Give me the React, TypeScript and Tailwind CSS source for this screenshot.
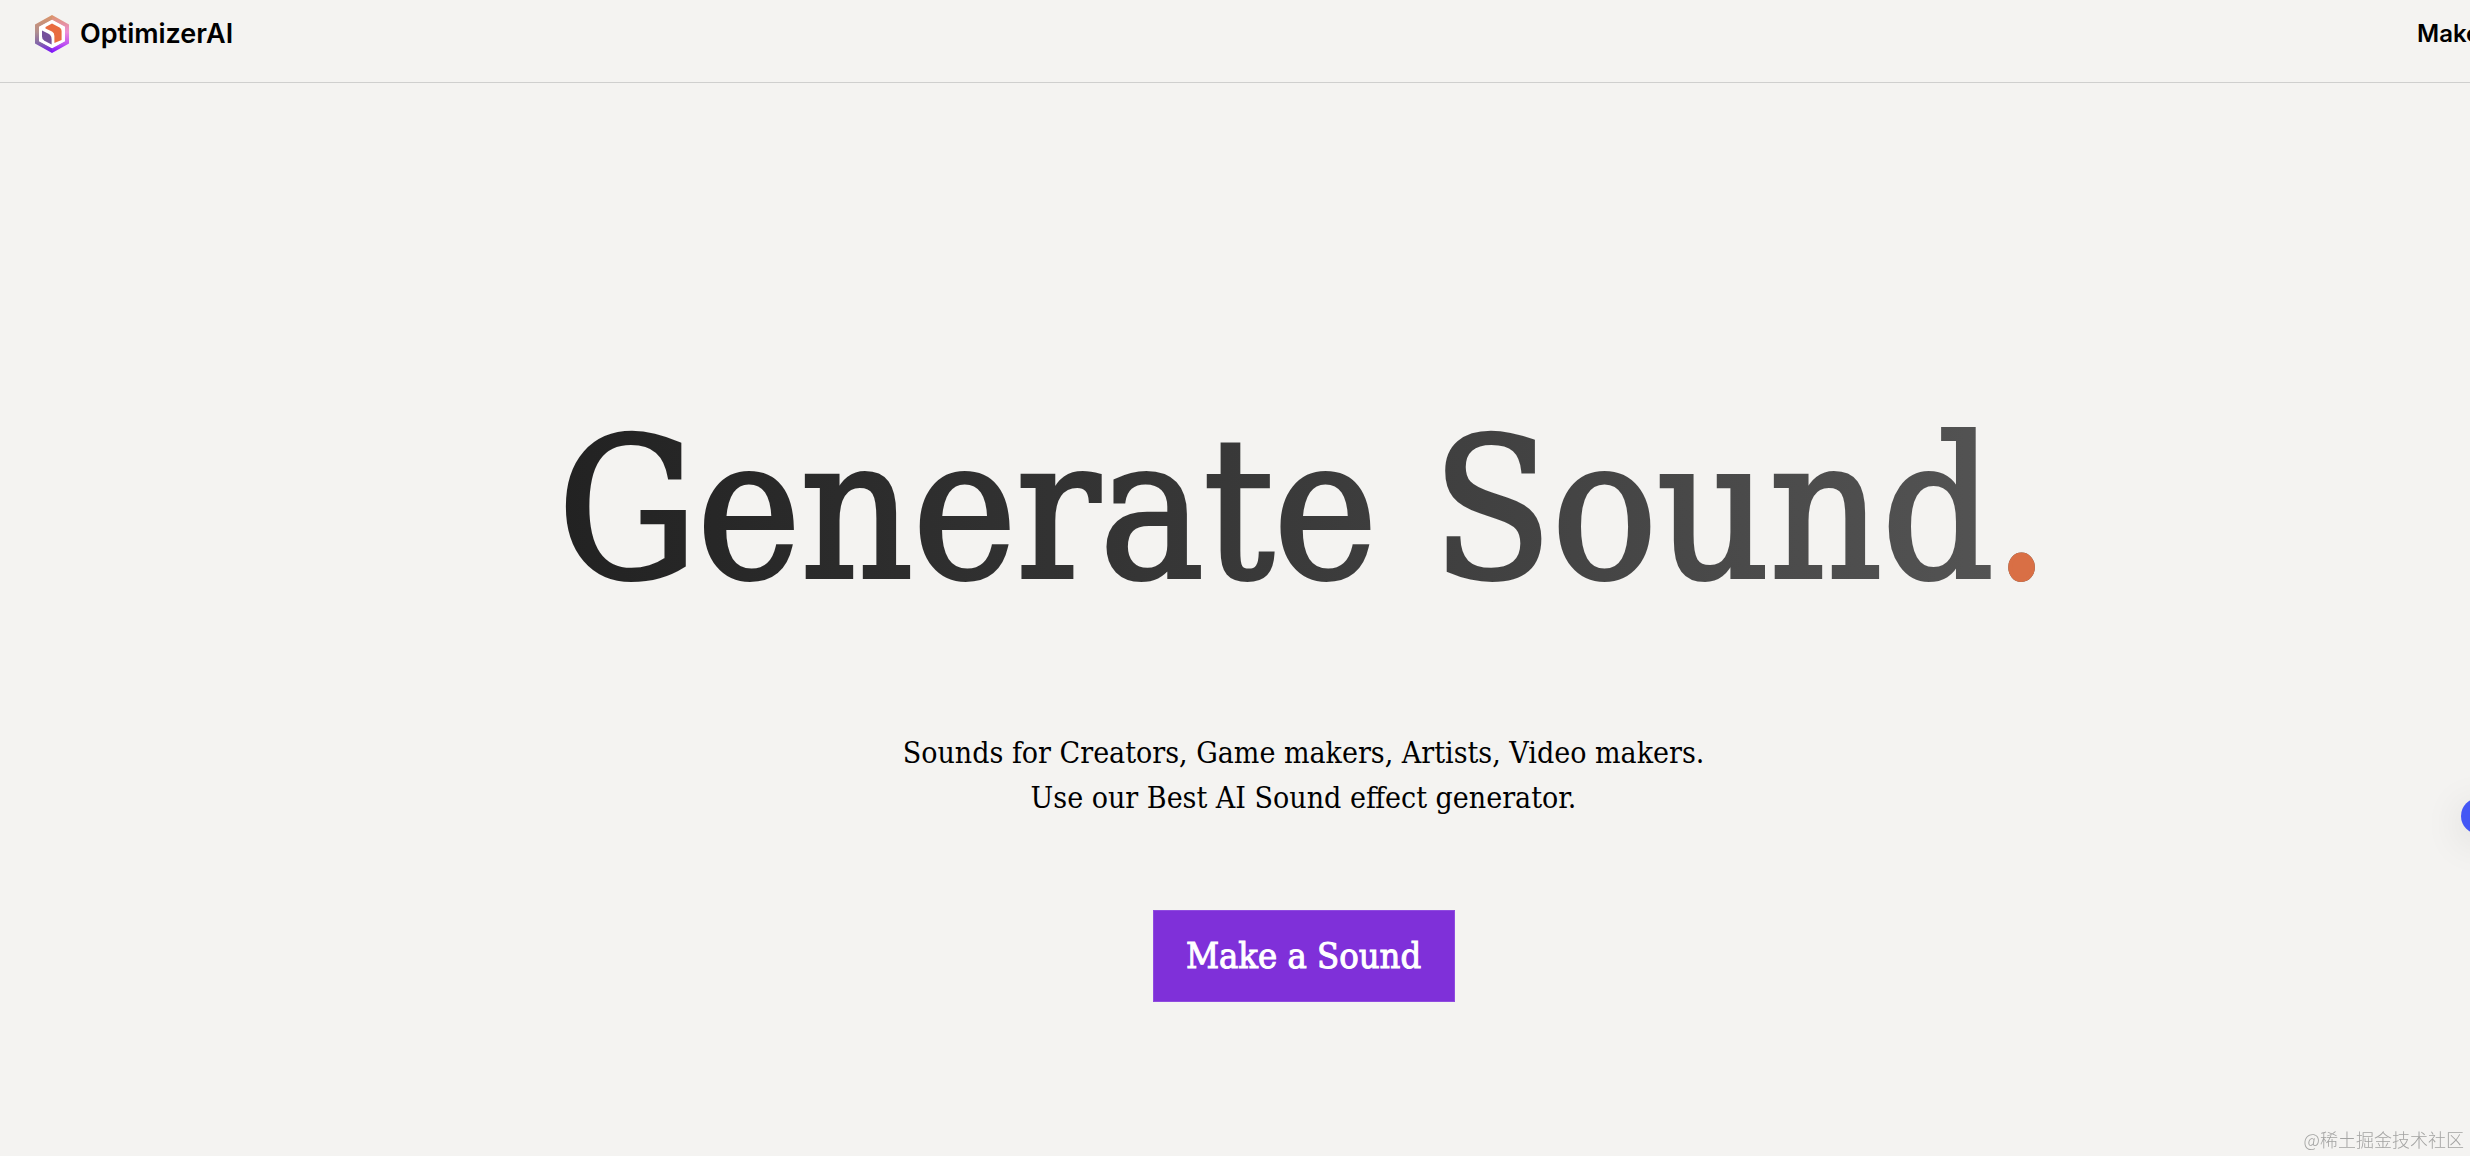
function LogoMark() {
  return (
    <svg viewBox="0 0 34 38" className="h-[38px] w-[34px] shrink-0" aria-hidden="true">
      <defs>
        <linearGradient id="ringRight" x1="0" y1="0" x2="0" y2="1">
          <stop offset="0" stopColor="#dc9468" />
          <stop offset="0.45" stopColor="#ee8fd6" />
          <stop offset="0.75" stopColor="#c355f0" />
          <stop offset="1" stopColor="#7a0cff" />
        </linearGradient>
        <linearGradient id="ringLeft" x1="0" y1="0" x2="0" y2="1">
          <stop offset="0" stopColor="#dc9468" />
          <stop offset="0.45" stopColor="#b08f90" />
          <stop offset="0.75" stopColor="#8266a8" />
          <stop offset="1" stopColor="#7a0cff" />
        </linearGradient>
      </defs>
      <path d="M17 0 L0 9.5 V28.5 L17 38 V33 L4.2 26 V12 L17 5 Z" fill="url(#ringLeft)" />
      <path d="M17 0 L34 9.5 V28.5 L17 38 V33 L29.8 26 V12 L17 5 Z" fill="url(#ringRight)" />
      <path d="M17 4.8 L30 11.8 V26.2 L17 33.2 L4 26.2 V11.8 Z" fill="#ffffff" />
      <path d="M10.5 12 L17 8.6 L24.6 12.4 Q26.6 13.6 26.6 16 V25 L19.4 28 V21 Q19.4 18 17 16.6 L10.5 13.4 Z" fill="#e96c40" />
      <path d="M7 15.6 L13 18.4 Q16.6 20.3 16.6 24 V29.4 L9.4 25.8 Q7 24.4 7 21.4 Z" fill="#75519c" />
    </svg>
  );
}

export default function App() {
  return (
    <div className="flex min-h-screen flex-col overflow-hidden bg-[#f4f3f1] text-black">
      <header className="flex h-[83px] items-start justify-between border-b border-[#cfcfce] pt-[14px] pl-[35px] font-['Inter',sans-serif]">
        <a href="#" className="flex h-[40px] items-center gap-[11px] text-[27px] font-semibold">
          <LogoMark />
          OptimizerAI
        </a>
        <nav className="flex h-[40px] w-[53px] items-center">
          <a href="#make" className="text-[24px] font-semibold whitespace-nowrap">
            Make
          </a>
        </nav>
      </header>

      <main className="flex grow flex-col items-center pt-[307px] pl-[137px] text-center font-['DejaVu_Serif_Condensed','DejaVu_Serif',serif]">
        <h1 className="bg-linear-to-r from-[#222222] to-[#555555] bg-clip-text text-[194px] leading-[240px] whitespace-nowrap text-transparent [-webkit-text-stroke:4px_transparent]">
          Generate Sound<span className="text-[#d96f45] [-webkit-text-stroke:4px_#d96f45]">.</span>
        </h1>
        <p className="mt-[100px] text-[30px] leading-[45px]">
          Sounds for Creators, Game makers, Artists, Video makers.
          <br />
          Use our Best AI Sound effect generator.
        </p>
        <button
          type="button"
          className="mt-[90px] h-[92px] w-[302px] border border-[#8f4bdf] bg-[#7f30d9] text-[36px] text-white [-webkit-text-stroke:1px_white]"
        >
          Make a Sound
        </button>
      </main>

      <button
        type="button"
        aria-label="Open assistant"
        className="fixed top-[798px] right-[-27px] size-9 rounded-full bg-[#4457f5] shadow-[0_8px_40px_rgba(0,0,0,0.12)]"
      />
      <footer className="fixed right-[6px] bottom-[4px] font-['Noto_Sans_CJK_SC',sans-serif] text-[18px] leading-[26px] font-light text-[#a3a3a2]">
        @稀土掘金技术社区
      </footer>
    </div>
  );
}
